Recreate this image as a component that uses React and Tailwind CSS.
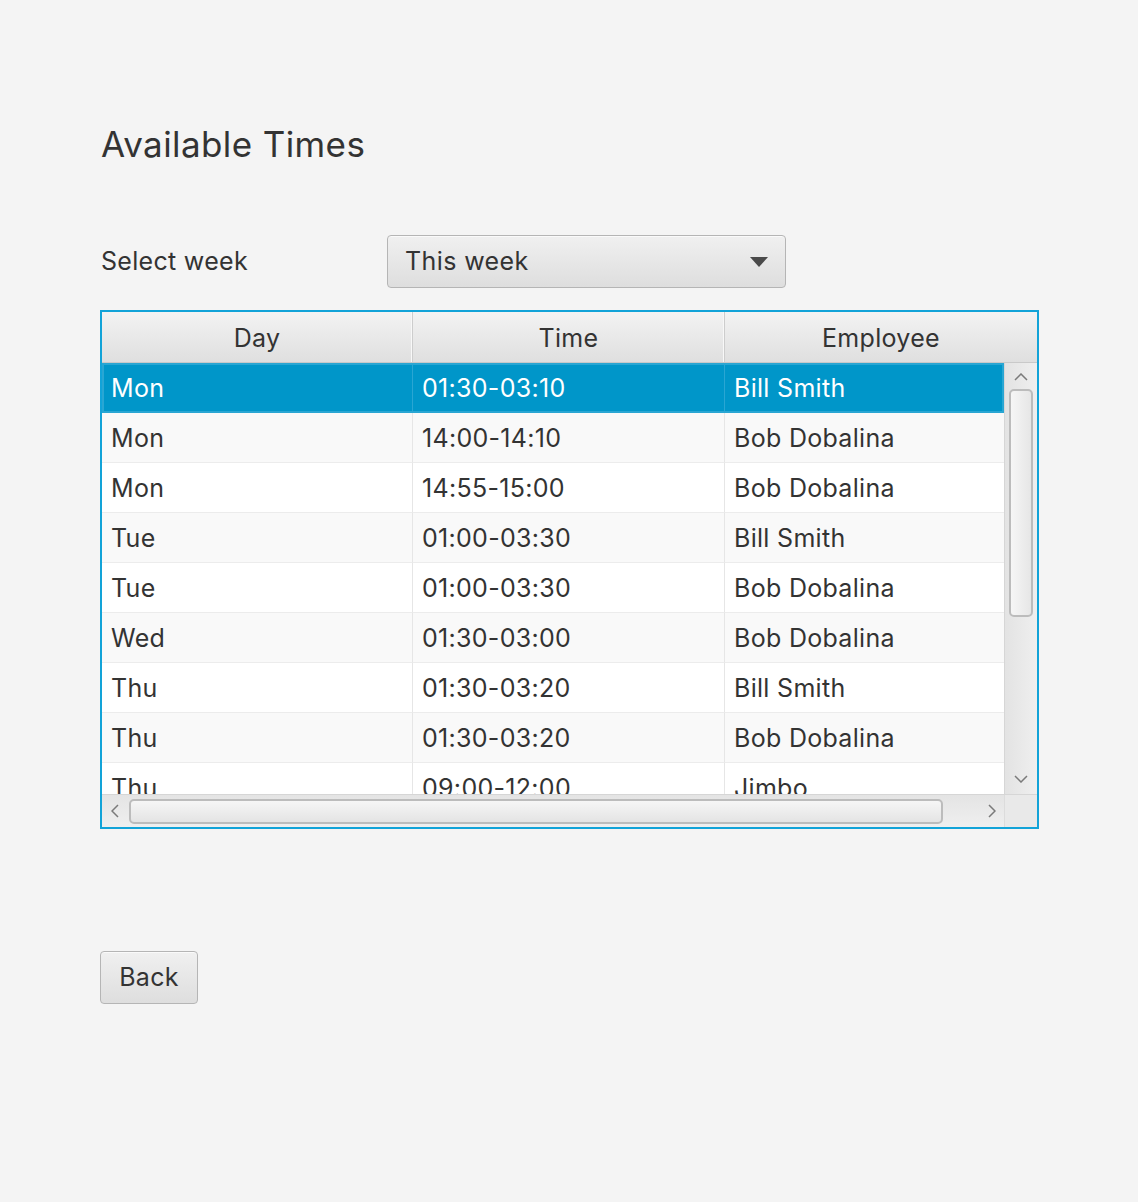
import React from 'react';

const rows = [
    ['Mon', '01:30-03:10', 'Bill Smith'],
    ['Mon', '14:00-14:10', 'Bob Dobalina'],
    ['Mon', '14:55-15:00', 'Bob Dobalina'],
    ['Tue', '01:00-03:30', 'Bill Smith'],
    ['Tue', '01:00-03:30', 'Bob Dobalina'],
    ['Wed', '01:30-03:00', 'Bob Dobalina'],
    ['Thu', '01:30-03:20', 'Bill Smith'],
    ['Thu', '01:30-03:20', 'Bob Dobalina'],
    ['Thu', '09:00-12:00', 'Jimbo'],
];

const Chevron = ({ dir }) => {
    const paths = {
        up: 'M1 7 L7 1 L13 7',
        down: 'M1 1 L7 7 L13 1',
        left: 'M7 1 L1 7 L7 13',
        right: 'M1 1 L7 7 L1 13',
    };
    const vertical = dir === 'up' || dir === 'down';
    return (
        <svg width={vertical ? 14 : 8} height={vertical ? 8 : 14} viewBox={vertical ? '0 0 14 8' : '0 0 8 14'}>
            <path d={paths[dir]} fill="none" stroke="#7a7a7a" strokeWidth="1.5" />
        </svg>
    );
};

const App = () => {
    const font = { fontFamily: 'Inter, "Noto Sans", sans-serif' };

    return (
        <div className="min-h-[1202px] w-full bg-[#f4f4f4] pl-[100px] pt-[122px] text-[#333333]" style={font}>
            <h1 className="text-[35px] leading-[44px] font-normal ml-[1px] tracking-[0.4px]">Available Times</h1>

            {/* Week selector */}
            <div className="flex items-center mt-[69px]">
                <span className="w-[287px] pl-[1px] text-[25px] tracking-[0.3px]">Select week</span>
                <div className="w-[399px] h-[53px] rounded-[4px] border border-[#b5b5b5] bg-gradient-to-b from-[#f0f0f0] to-[#dedede] flex items-center justify-between pl-[17px] pr-[17px] shadow-[inset_0_1px_0_#fafafa]">
                    <span className="text-[25px] tracking-[0.4px]">This week</span>
                    <svg width="18" height="10" viewBox="0 0 18 10">
                        <path d="M0 0 L18 0 L9 10 Z" fill="#4a4a4a" />
                    </svg>
                </div>
            </div>

            {/* Table */}
            <div className="mt-[22px] w-[939px] border-2 border-[#12a3d8] bg-[#f4f4f4]">
                {/* Header */}
                <div className="grid grid-cols-[311px_312px_312px] h-[51px] bg-gradient-to-b from-[#f3f3f3] to-[#dfdfdf] border-b border-[#c9c9c9]">
                    {['Day', 'Time', 'Employee'].map((h, i) => (
                        <div
                            key={h}
                            className={`flex items-center justify-center pt-[4px] text-[25px] tracking-[0.3px] ${i < 2 ? 'border-r border-[#cdcdcd] shadow-[inset_-1px_0_0_#f8f8f8]' : ''}`}
                        >
                            {h}
                        </div>
                    ))}
                </div>

                <div className="flex h-[431px]">
                    {/* Body rows */}
                    <div className="w-[902px] overflow-hidden bg-white">
                        {rows.map((r, i) => {
                            const selected = i === 0;
                            return (
                                <div
                                    key={i}
                                    className={`grid grid-cols-[311px_312px_312px] h-[50px] shrink-0 ${selected
                                        ? 'bg-[#0096c9] text-white shadow-[inset_0_0_0_2px_#29a6d3]'
                                        : i % 2 === 1
                                            ? 'bg-[#f9f9f9]'
                                            : 'bg-white'
                                        }`}
                                >
                                    {r.map((c, j) => (
                                        <div
                                            key={j}
                                            className={`flex items-center pl-[9px] pt-[3px] text-[25px] tracking-[0.3px] border-b ${selected ? 'border-[#29a6d3]' : 'border-[#ececec]'} ${j < 2 ? (selected ? 'border-r border-r-[#29a6d3]' : 'border-r border-r-[#e6e6e6]') : ''}`}
                                        >
                                            {c}
                                        </div>
                                    ))}
                                </div>
                            );
                        })}
                    </div>

                    {/* Vertical scrollbar */}
                    <div className="w-[33px] flex flex-col items-center bg-gradient-to-r from-[#e3e3e3] to-[#efefef] border-l border-[#d6d6d6]">
                        <div className="h-[26px] flex items-center justify-center pt-[2px]">
                            <Chevron dir="up" />
                        </div>
                        <div className="flex-1 w-full px-[4px]">
                            <div className="h-[228px] rounded-[5px] border-2 border-[#bcbcbc] bg-gradient-to-r from-[#f6f6f6] to-[#e6e6e6]" />
                        </div>
                        <div className="h-[26px] flex items-center justify-center pb-[4px]">
                            <Chevron dir="down" />
                        </div>
                    </div>
                </div>

                {/* Horizontal scrollbar */}
                <div className="flex h-[33px] border-t border-[#d6d6d6]">
                    <div className="w-[902px] flex items-center bg-gradient-to-b from-[#e4e4e4] to-[#efefef]">
                        <div className="w-[27px] flex items-center justify-center pr-[2px]">
                            <Chevron dir="left" />
                        </div>
                        <div className="w-[814px] h-[25px] rounded-[5px] border-2 border-[#bcbcbc] bg-gradient-to-b from-[#f6f6f6] to-[#e4e4e4]" />
                        <div className="flex-1 flex items-center justify-end pr-[8px]">
                            <Chevron dir="right" />
                        </div>
                    </div>
                    <div className="w-[33px] bg-[#e9e9e9] border-l border-[#dcdcdc]" />
                </div>
            </div>

            {/* Back button */}
            <button className="mt-[122px] w-[98px] h-[53px] rounded-[4px] border border-[#b5b5b5] bg-gradient-to-b from-[#f0f0f0] to-[#dedede] text-[25px] tracking-[0.3px] text-[#333333] shadow-[inset_0_1px_0_#fafafa]">
                Back
            </button>
        </div>
    );
};

export default App;
